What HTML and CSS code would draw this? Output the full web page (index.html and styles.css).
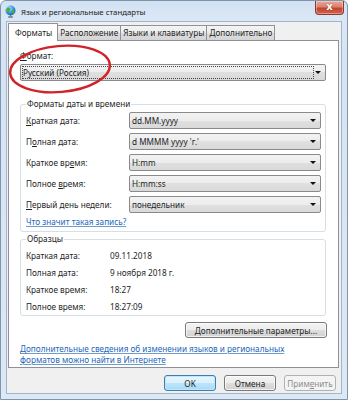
FILE: index.html
```html
<!DOCTYPE html>
<html lang="ru">
<head>
<meta charset="utf-8">
<title>Язык и региональные стандарты</title>
<link rel="stylesheet" href="styles.css">
</head>
<body>
<div class="window">
  <div class="titlebar">
    <svg class="appicon" width="13" height="14" viewBox="0 0 13 14">
      <defs>
        <radialGradient id="gl" cx="0.35" cy="0.3" r="0.8">
          <stop offset="0" stop-color="#bfe6ff"/>
          <stop offset="0.6" stop-color="#2f8fd8"/>
          <stop offset="1" stop-color="#1a5aa8"/>
        </radialGradient>
      </defs>
      <rect x="4" y="11" width="5" height="2" rx="1" fill="#8a8f96"/>
      <rect x="6" y="9" width="1" height="3" fill="#8a8f96"/>
      <circle cx="6.5" cy="5.5" r="5" fill="url(#gl)"/>
      <path d="M3 3.2 C4.2 2.2 6 2.4 6.4 3.6 C6.6 4.6 5.4 5 5.6 6.2 C5.8 7.4 4.2 8 3.4 7 C2.6 6 2.2 4.2 3 3.2Z" fill="#4cae3c"/>
      <path d="M8.2 5.2 C9.4 4.8 10.8 5.4 10.6 6.8 C10.4 8.2 9.2 9 8.4 8.4 C7.8 7.8 7.4 5.6 8.2 5.2Z" fill="#4cae3c"/>
    </svg>
    <span class="title">Язык и региональные стандарты</span>
    <div class="close"><span class="cx">x</span></div>
  </div>
  <div class="client">
    <div class="tabs">
      <div class="tab sel">Форматы</div>
      <div class="tab">Расположение</div>
      <div class="tab">Языки и клавиатуры</div>
      <div class="tab">Дополнительно</div>
    </div>
    <div class="panel">
      <div class="label"><u>Ф</u>ормат:</div>
      <div class="combo main"><span class="focus">Русский (Россия)</span><i class="arrow"></i></div>

      <fieldset class="group g1">
        <legend>Форматы даты и времени</legend>
        <div class="rows">
          <span class="rl"><u>К</u>раткая дата:</span>
          <div class="combo"><span class="val">dd.MM.yyyy</span><i class="arrow"></i></div>
          <span class="rl">П<u>о</u>лная дата:</span>
          <div class="combo"><span class="val">d MMMM yyyy 'г.'</span><i class="arrow"></i></div>
          <span class="rl">Краткое вр<u>е</u>мя:</span>
          <div class="combo"><span class="val">H:mm</span><i class="arrow"></i></div>
          <span class="rl">Полное <u>в</u>ремя:</span>
          <div class="combo"><span class="val">H:mm:ss</span><i class="arrow"></i></div>
          <span class="rl"><u>П</u>ервый день недели:</span>
          <div class="combo"><span class="val">понедельник</span><i class="arrow"></i></div>
        </div>
        <a class="link what" href="#">Что значит такая запись?</a>
      </fieldset>

      <fieldset class="group g2">
        <legend>Образцы</legend>
        <div class="samples">
          <span>Краткая дата:</span><span>09.11.2018</span>
          <span>Полная дата:</span><span>9 ноября 2018 г.</span>
          <span>Краткое время:</span><span>18:27</span>
          <span>Полное время:</span><span>18:27:09</span>
        </div>
      </fieldset>

      <div class="advrow"><button class="btn adv"><u>Д</u>ополнительные параметры...</button></div>
      <a class="link more" href="#">Дополнительные сведения об изменении языков и региональных форматов можно найти в Интернете</a>
    </div>
    <div class="buttons">
      <button class="btn ok">OK</button>
      <button class="btn">Отмена</button>
      <button class="btn dis">Прим<u>е</u>нить</button>
    </div>
  </div>
  <svg class="ellipse" width="110" height="56" viewBox="0 0 110 56">
    <ellipse cx="56" cy="27" rx="50" ry="23" transform="rotate(-5 56 27)" fill="none" stroke="#d0242a" stroke-width="2.4"/>
  </svg>
</div>
</body>
</html>
```
FILE: styles.css
```css
* { box-sizing: border-box; }
html, body { margin: 0; padding: 0; }
body {
  width: 348px;
  height: 400px;
  overflow: hidden;
  background: #ffffff;
  font-family: "Noto Sans", "Open Sans", sans-serif;
  font-size: 8.2px;
  color: #1e1e1e;
}
u { text-decoration: underline; text-underline-offset: 1px; }

.window {
  position: relative;
  width: 348px;
  height: 400px;
  border: 1px solid #7f95ae;
  border-radius: 6px 6px 0 0;
  background: linear-gradient(180deg, #d2e2f3 0px, #dbe7f5 20px, #d6e3f2 60px, #dde8f5 100%);
  display: flex;
  flex-direction: column;
}

.titlebar {
  height: 20px;
  display: flex;
  align-items: center;
  padding-left: 3px;
  flex: none;
}
.appicon { flex: none; margin-top: 1px; }
.title {
  margin-left: 4px;
  font-size: 7.8px;
  color: #1b1b1b;
  margin-top: 1px;
}
.close {
  margin-left: auto;
  margin-right: 3px;
  align-self: flex-start;
  width: 29px;
  height: 14px;
  border: 1px solid #8a3a33;
  border-top: none;
  border-radius: 0 0 4px 4px;
  background: linear-gradient(180deg, #e9a99b 0%, #d9826f 45%, #c4432d 55%, #d0624a 100%);
  box-shadow: inset 0 0 0 1px rgba(255,255,255,0.35);
  display: flex;
  align-items: center;
  justify-content: center;
}
.cx {
  color: #fff;
  font-family: "DejaVu Sans", sans-serif;
  font-weight: bold;
  font-size: 10px;
  line-height: 10px;
  margin-top: -2px;
  text-shadow: 0 0 1px #6a1a10;
}

.client {
  flex: 1;
  margin: 0 5px 5px 5px;
  border: 1px solid #a3b5ca;
  background: #f0f0f0;
  padding: 1px 2px 2px 1px;
  display: flex;
  flex-direction: column;
}

.tabs {
  display: flex;
  height: 18px;
  margin-bottom: -1px;
  position: relative;
  z-index: 1;
  flex: none;
}
.tab {
  align-self: flex-start;
  margin-top: 2px;
  height: 15px;
  border: 1px solid #8e9298;
  border-bottom: none;
  border-left: none;
  background: linear-gradient(180deg, #f4f4f4 0%, #ececec 50%, #dedede 50%, #d4d4d4 100%);
  padding: 0 2px;
  line-height: 13px;
  color: #1e1e1e;
  white-space: nowrap;
}
.tab.sel {
  margin-top: 0;
  height: 18px;
  border-left: 1px solid #8e9298;
  background: #ffffff;
  padding: 0 5px 0 6px;
  line-height: 17px;
}

.panel {
  flex: 1;
  border: 1px solid #8e9298;
  background: #ffffff;
  padding: 8px 12px 0 11px;
  display: flex;
  flex-direction: column;
}

.label { line-height: 13px; height: 13px; }

.combo {
  position: relative;
  height: 17px;
  border: 1px solid #8a8a8a;
  border-radius: 2px;
  background: linear-gradient(180deg, #f3f3f3 0%, #ececec 50%, #e0e0e0 50%, #d9d9d9 100%);
  display: flex;
  align-items: center;
  padding-left: 1px;
}
.combo.main { margin-top: 2px; }
.combo .val { line-height: 15px; padding-left: 1px; }
.focus {
  flex: 1;
  margin-right: 11px;
  height: 13px;
  line-height: 12px;
  border: 1px dotted #444;
  padding-left: 0;
}
.arrow {
  position: absolute;
  right: 4px;
  top: 6px;
  width: 0;
  height: 0;
  border-left: 3px solid transparent;
  border-right: 3px solid transparent;
  border-top: 3px solid #111;
}

fieldset.group {
  margin: 0;
  border: 1px solid #d5dfe5;
  border-radius: 3px;
  min-inline-size: 0;
}
fieldset.group legend {
  padding: 0 1px;
  line-height: 12px;
  height: 12px;
}
.g1 { margin-top: 17px !important; padding: 2px 4px 3px 5px; }
.rows {
  display: grid;
  grid-template-columns: 103px 1fr;
  row-gap: 4px;
  align-items: center;
}
.rl { line-height: 17px; }
.link {
  color: #1d66b9;
  text-decoration: underline;
  text-decoration-color: #6e9bd0;
}
.what { display: block; margin-top: 3px; line-height: 12px; }

.g2 { margin-top: 1px !important; padding: 2px 5px 0 5px; }
.samples {
  display: grid;
  grid-template-columns: 84px 1fr;
  grid-auto-rows: 17px;
  align-items: center;
}

.advrow { display: flex; justify-content: flex-end; margin-top: 6px; margin-right: -1px; }
.btn {
  font-family: inherit;
  font-size: 8.2px;
  color: #1e1e1e;
  height: 16px;
  padding: 0;
  border: 1px solid #7a7a7a;
  border-radius: 3px;
  background: linear-gradient(180deg, #f4f4f4 0%, #ececec 50%, #dedede 50%, #d2d2d2 100%);
  box-shadow: inset 0 0 0 1px rgba(255,255,255,0.7);
  line-height: 13px;
}
.adv { width: 142px; }
.more { display: block; margin-top: 5px; line-height: 11px; padding-right: 10px; }

.buttons {
  flex: none;
  display: flex;
  justify-content: flex-end;
  gap: 8px;
  margin-top: 7px;
  padding-right: 3px;
}
.buttons .btn { width: 52px; }
.btn.ok {
  border-color: #3c7fb1;
  background: linear-gradient(180deg, #eaf6fd 0%, #d9f0fc 50%, #bee6fd 50%, #a7d9f5 100%);
  box-shadow: inset 0 0 0 1px #c0e6f8;
}
.btn.dis {
  color: #8d8d8d;
  border-color: #adb2b5;
  background: #f4f4f4;
  box-shadow: none;
}

.ellipse {
  position: absolute;
  left: 3px;
  top: 41px;
}
```
